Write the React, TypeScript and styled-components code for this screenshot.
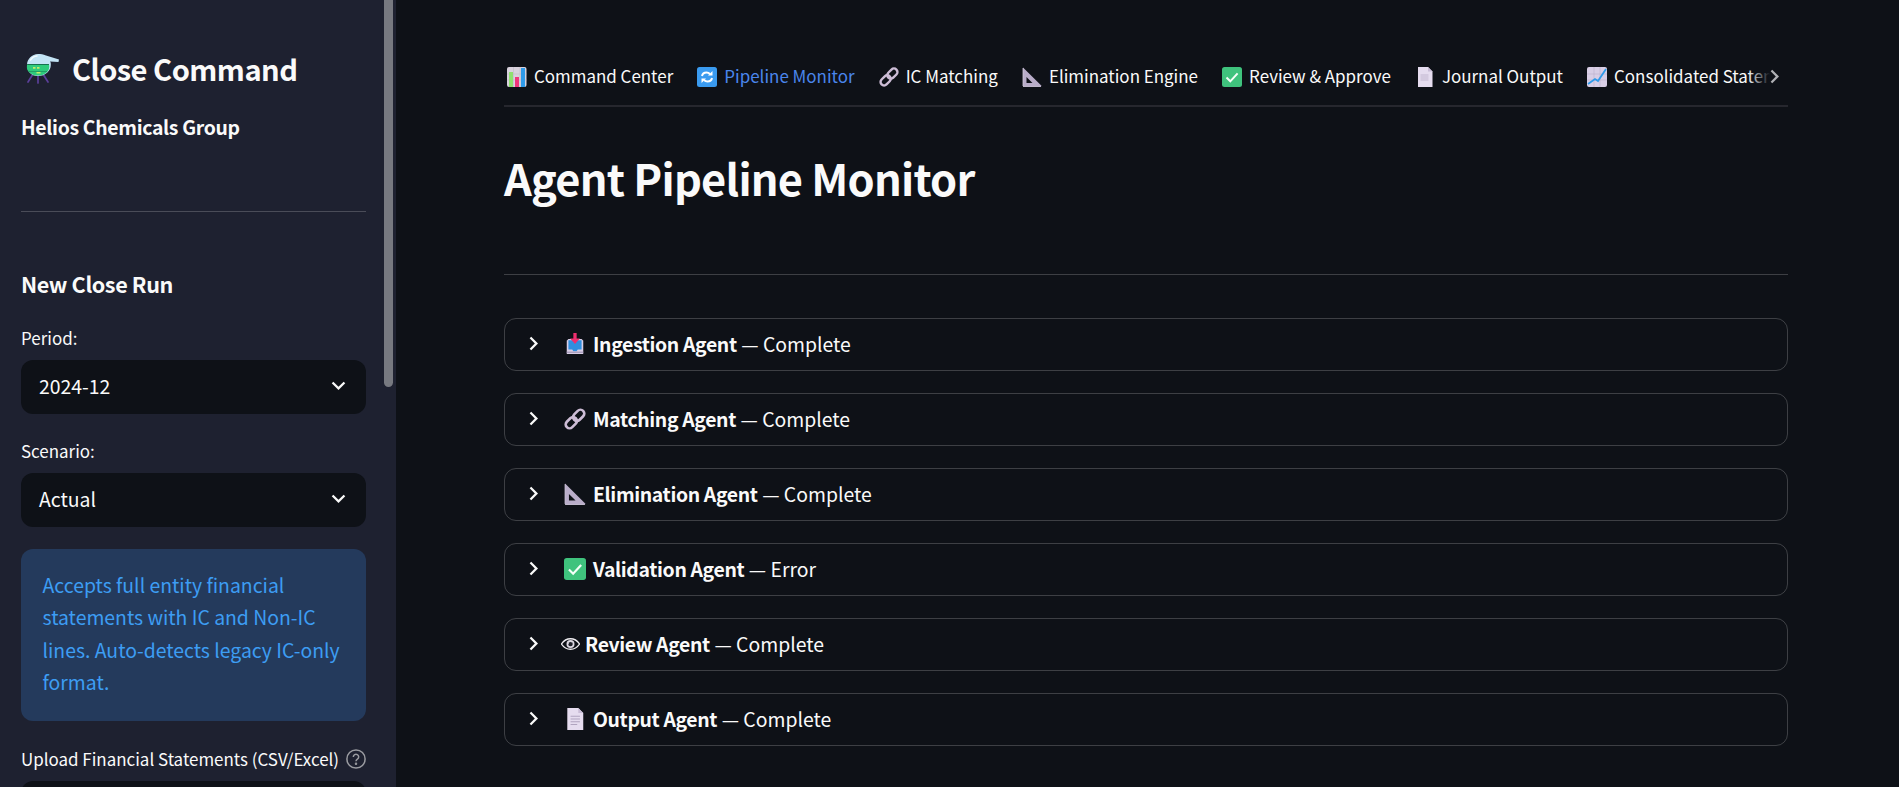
import React from "react";
import styled, { createGlobalStyle } from "styled-components";

const FONT = `"Noto Sans CJK SC", "Noto Sans", sans-serif`;

const Global = createGlobalStyle`
  html, body, #root { margin: 0; padding: 0; height: 100%; overflow: hidden; background: #0e1117; }
  body { font-family: ${FONT}; color: #fafafa; }
  * { box-sizing: border-box; }
`;

const Page = styled.div`display: flex; height: 787px; width: 1899px; overflow: hidden;`;
const Sidebar = styled.aside`position: relative; width: 396px; flex: none; height: 100%; background: #1e2130; padding: 0 30px 0 21px; overflow: hidden;`;
const Scroll = styled.div`position: absolute; top: 0; left: 384px; width: 9px; height: 387px; background: #777980; border-radius: 0 0 5px 5px;`;
const Brand = styled.div`display: flex; align-items: center; gap: 12px; margin-top: 47px; padding-left: 5px; height: 42px;`;
const BrandText = styled.span`font-size: 29.1px; line-height: 42px; font-weight: 700; letter-spacing: -0.018em; white-space: nowrap;`;
const Org = styled.div`margin-top: 23px; font-size: 19.4px; line-height: 30px; font-weight: 700; letter-spacing: -0.016em;`;
const Rule = styled.hr`border: 0; height: 1px; background: rgba(250,250,250,.2); margin: 0;`;
const SideRule = styled(Rule)`margin-top: 69px;`;
const SideHead = styled.div`margin-top: 55.6px; font-size: 21.6px; line-height: 32px; font-weight: 700; letter-spacing: -0.018em;`;
const Label = styled.div`display: flex; align-items: center; justify-content: space-between; font-size: 16.95px; line-height: 24px; color: #fafafa; white-space: nowrap;`;
const PeriodLabel = styled(Label)`margin-top: 26px;`;
const ScenarioLabel = styled(Label)`margin-top: 25px;`;
const UploadLabel = styled(Label)`margin-top: 26px;`;
const Select = styled.div`display: flex; align-items: center; justify-content: space-between; height: 54px; margin-top: 10px; padding: 0 14.5px 2px 18px; background: #0e1117; border-radius: 12px; font-size: 19.4px;`;
const Info = styled.div`margin-top: 22px; height: 172px; padding: 20px 16px 0 21.5px; background: #243a5c; border-radius: 12px; color: #3d9df3; font-size: 19.4px; line-height: 32.5px;`;
const Drop = styled.div`margin-top: 10px; height: 60px; background: #0e1117; border-radius: 12px;`;

const Main = styled.main`flex: 1; min-width: 0; padding: 0 111px 0 108px;`;
const TabBar = styled.div`position: relative; margin-top: 54px; height: 53px; border-bottom: 2px solid #26272e; overflow: hidden;`;
const TabRow = styled.div`display: flex; gap: 21.1px; height: 53px; white-space: nowrap;`;
const Tab = styled.div<{ $active?: boolean }>`flex: none; display: flex; align-items: flex-start; gap: 7px; height: 53px; padding: 10px 0 0 3px; font-size: 16.95px; line-height: 24px; color: ${(p) => (p.$active ? "#4a86ec" : "#fafafa")}; border-bottom: 2px solid ${(p) => (p.$active ? "#4a86ec" : "transparent")};`;
const TabIcon = styled.span`display: flex; margin-top: 3px; width: 20px; height: 20px; flex: none;`;
const Fade = styled.div`position: absolute; top: 0; right: 0; width: 40px; height: 50px; padding-top: 9px; background: linear-gradient(90deg, rgba(14,17,23,0), #0e1117 55%); display: flex; justify-content: flex-end;`;
const Title = styled.h1`margin: 37.5px 0 0; font-size: 43.4px; line-height: 64px; font-weight: 700; letter-spacing: -0.018em;`;
const MainRule = styled(Rule)`margin-top: 65.5px;`;
const List = styled.div`display: flex; flex-direction: column; gap: 22px; margin-top: 43px;`;
const Row = styled.div`display: flex; align-items: center; height: 53px; padding: 0 0 2px 15px; border: 1px solid rgba(250,250,250,.2); border-radius: 12px; font-size: 19.4px; white-space: nowrap;`;
const Caret = styled.span`display: flex; width: 27px; margin-right: 14px; flex: none;`;
const RowIcon = styled.span<{ $w: number; $tight?: boolean }>`display: flex; justify-content: center; width: ${(p) => p.$w}px; margin: 0 ${(p) => (p.$tight ? 5 : 7)}px 0 ${(p) => (p.$tight ? 0 : 3)}px; flex: none;`;
const Strong = styled.b`font-weight: 700; letter-spacing: -0.018em; margin-right: 4.5px;`;

type IconProps = { size?: number };

const Alembic = ({ size = 34 }: IconProps) => (
  <svg width={size} height={size} viewBox="0 0 34 34">
    <path d="M7 23L2 31M12 24V32M17 23l5 8" stroke="#5b3f9a" strokeWidth="1.700" fill="none" strokeLinecap="round" />
    <path d="M12 3c3 0 5 .3 8 1.600L33 8.500 32.500 11 24 10.500c1 1 .8 2 .8 3.500 0 6-5.500 11-12.800 11S1 20 1 14 6 3 12 3z" fill="#c3e4f5" />
    <path d="M1.200 13h21.700c.6 2.500.300 4.500-.4 6-1.800 3.500-5.500 5.500-10.500 5.500S3.300 22.500 1.500 19c-.7-1.500-.8-3.500-.3-6z" fill="#2ecb7c" />
    <path d="M1.200 13h21.700v1H1.200zM3 20h18v.6H3z" fill="#15734f" />
    <path d="M7 16h2.500v1.800H7zM11 16h2.500v1.800H11zM14.500 21h-4v1.500h4z" fill="#c4ec68" />
    <path d="M4.500 9c1.600-2.400 3.800-3.800 6.500-4" stroke="#f2fbff" strokeWidth="1.400" fill="none" strokeLinecap="round" />
  </svg>
);

const Chart = () => (
  <svg width="20" height="20" viewBox="0 0 20 20">
    <rect x="0" y="0" width="19.500" height="20" rx="2" fill="#d8d2dd" />
    <path d="M0 7h19.500M0 13h19.500M6.500 0v20M13 0v20" stroke="#bdb6c4" strokeWidth=".5" />
    <rect x="2" y="5" width="4" height="15" fill="#8ee06e" />
    <rect x="8" y="10" width="4" height="10" fill="#f0367c" />
    <rect x="14" y="1" width="4" height="19" fill="#2f9bea" />
  </svg>
);

const Cycle = () => (
  <svg width="20" height="20" viewBox="0 0 20 20">
    <rect x="0" y="0" width="20" height="20" rx="2.500" fill="#3a9bf0" />
    <path d="M5 9c.5-2.500 2.500-3.500 4.500-3.500 1.500 0 2.500.5 3.500 1.500" stroke="#fff" strokeWidth="2" fill="none" />
    <path d="M11 8.500h4.500V4z" fill="#fff" />
    <path d="M15 11c-.5 2.500-2.500 3.500-4.500 3.500-1.500 0-2.500-.5-3.500-1.500" stroke="#fff" strokeWidth="2" fill="none" />
    <path d="M9 11.500H4.500V16z" fill="#fff" />
  </svg>
);

const Link = ({ size = 20 }: IconProps) => (
  <svg width={size} height={size} viewBox="0 0 20 20">
    <g fill="none" stroke="#cdbdd6" strokeWidth="2.400" transform="rotate(-45 10 10)">
      <rect x="-0.500" y="6.500" width="11.500" height="7" rx="3.500" />
      <rect x="9" y="6.500" width="11.500" height="7" rx="3.500" />
    </g>
  </svg>
);

const Ruler = ({ size = 20 }: IconProps) => (
  <svg width={size} height={size} viewBox="0 0 20 20">
    <path fillRule="evenodd" d="M1 .5l18.500 18.300-.5.700H1zM4.500 10v6h6z" fill="#b9adc9" />
    <path d="M1 19.500h18M1 1v18" stroke="#d5cce0" strokeWidth=".8" />
  </svg>
);

const Check = ({ size = 20 }: IconProps) => (
  <svg width={size} height={size} viewBox="0 0 20 20">
    <rect x="0" y="0" width="20" height="20" rx="2.500" fill="#3fc37d" />
    <path d="M4.500 10.500l3.800 3.800 7.300-8" stroke="#f4fff8" strokeWidth="2" fill="none" />
  </svg>
);

const Doc = ({ lines, size = 20 }: IconProps & { lines?: boolean }) => (
  <svg width={size} height={size} viewBox="0 0 20 20">
    <path d="M3 0h10l4.500 4.500V20H3z" fill="#e5dcef" />
    <path d="M13 0l4.500 4.500H13z" fill="#c8bcd6" />
    {lines ? (
      <path d="M6 7.500h8.500M6 10h8.500M6 12.500h8.500M6 15h6" stroke="#a89cb8" strokeWidth=".8" />
    ) : (
      <rect x="5.500" y="7" width="8" height="7" fill="#d3c9df" />
    )}
  </svg>
);

const Trend = () => (
  <svg width="20" height="20" viewBox="0 0 20 20">
    <rect x="0" y="0" width="20" height="20" rx="2" fill="#d8cee6" />
    <path d="M0 7h20M0 13h20M7 0v20M13 0v20" stroke="#b5a9c7" strokeWidth=".5" />
    <path d="M1 17l7-5 3 2 8-12" stroke="#2f9bea" strokeWidth="1.800" fill="none" />
  </svg>
);

const Inbox = () => (
  <svg width="22" height="22" viewBox="0 0 20 20">
    <path d="M2.500 7l1.500-1.500h12L17.500 7v12h-15z" fill="#d8cee6" />
    <path d="M4 6.500h12V15h-3.500l-1 1.500h-3l-1-1.500H4z" fill="#2f8fe0" />
    <path d="M2.500 17.500h15" stroke="#a79bbb" strokeWidth="1.200" />
    <path d="M8.500 0h3v5h3L10 10 5.500 5h3z" fill="#ef2f6e" />
  </svg>
);

const Eye = () => (
  <svg width="19" height="14" viewBox="0 0 20 14">
    <path d="M.5 7C3 3.300 6 1.500 10 1.500S17 3.300 19.500 7C17 10.700 14 12.500 10 12.500S3 10.700.5 7z" fill="#0e1117" stroke="#f0eef2" strokeWidth="1.400" />
    <circle cx="10" cy="7" r="4.200" fill="#dcd8e2" />
    <circle cx="10" cy="7" r="2.400" fill="#20222b" />
    <path d="M7.500 7a2.500 2.500 0 0 1 4-2" stroke="#e6e4ea" strokeWidth=".8" fill="none" />
  </svg>
);

const ChevronRight = ({ size = 27, color = "#fafafa" }: { size?: number; color?: string }) => (
  <svg width={size} height={size} viewBox="0 0 24 24" fill={color}>
    <path d="M8.590 16.590 13.170 12 8.590 7.410 10 6l6 6-6 6z" />
  </svg>
);
const ChevronDown = () => (
  <svg width="27" height="27" viewBox="0 0 24 24" fill="#fafafa">
    <path d="M7.410 8.590 12 13.170l4.590-4.580L18 10l-6 6-6-6z" />
  </svg>
);
const Help = () => (
  <svg width="20" height="20" viewBox="0 0 20 20" fill="none" stroke="#9a9ba0" strokeWidth="1.500">
    <circle cx="10" cy="10" r="9.100" />
    <path d="M7.300 7.900a2.700 2.700 0 1 1 4.100 2.300c-1 .6-1.400 1-1.400 2.100" />
    <circle cx="10" cy="14.800" r=".5" fill="#9a9ba0" />
  </svg>
);

const tabs: { label: string; icon: React.ReactNode; active?: boolean }[] = [
  { label: "Command Center", icon: <Chart /> },
  { label: "Pipeline Monitor", icon: <Cycle />, active: true },
  { label: "IC Matching", icon: <Link /> },
  { label: "Elimination Engine", icon: <Ruler /> },
  { label: "Review & Approve", icon: <Check /> },
  { label: "Journal Output", icon: <Doc /> },
  { label: "Consolidated Statements", icon: <Trend /> },
];

const agents: { name: string; status: string; icon: React.ReactNode; w: number; tight?: boolean }[] = [
  { name: "Ingestion Agent", status: "Complete", icon: <Inbox />, w: 22 },
  { name: "Matching Agent", status: "Complete", icon: <Link size={22} />, w: 22 },
  { name: "Elimination Agent", status: "Complete", icon: <Ruler size={22} />, w: 22 },
  { name: "Validation Agent", status: "Error", icon: <Check size={22} />, w: 22 },
  { name: "Review Agent", status: "Complete", icon: <Eye />, w: 19, tight: true },
  { name: "Output Agent", status: "Complete", icon: <Doc lines size={22} />, w: 22 },
];

export default function App() {
  return (
    <>
      <Global />
      <Page>
        <Sidebar>
          <Scroll />
          <Brand>
            <Alembic />
            <BrandText>Close Command</BrandText>
          </Brand>
          <Org>Helios Chemicals Group</Org>
          <SideRule />
          <SideHead>New Close Run</SideHead>
          <PeriodLabel>Period:</PeriodLabel>
          <Select>2024-12<ChevronDown /></Select>
          <ScenarioLabel>Scenario:</ScenarioLabel>
          <Select>Actual<ChevronDown /></Select>
          <Info>Accepts full entity financial statements with IC and Non-IC lines. Auto-detects legacy IC-only format.</Info>
          <UploadLabel>Upload Financial Statements (CSV/Excel)<Help /></UploadLabel>
          <Drop />
        </Sidebar>
        <Main>
          <TabBar>
            <TabRow>
              {tabs.map((t) => (
                <Tab key={t.label} $active={t.active}>
                  <TabIcon>{t.icon}</TabIcon>
                  {t.label}
                </Tab>
              ))}
            </TabRow>
            <Fade><ChevronRight color="#b0b1b5" /></Fade>
          </TabBar>
          <Title>Agent Pipeline Monitor</Title>
          <MainRule />
          <List>
            {agents.map((a) => (
              <Row key={a.name}>
                <Caret><ChevronRight /></Caret>
                <RowIcon $w={a.w} $tight={a.tight}>{a.icon}</RowIcon>
                <Strong>{a.name}</Strong>— {a.status}
              </Row>
            ))}
          </List>
        </Main>
      </Page>
    </>
  );
}
